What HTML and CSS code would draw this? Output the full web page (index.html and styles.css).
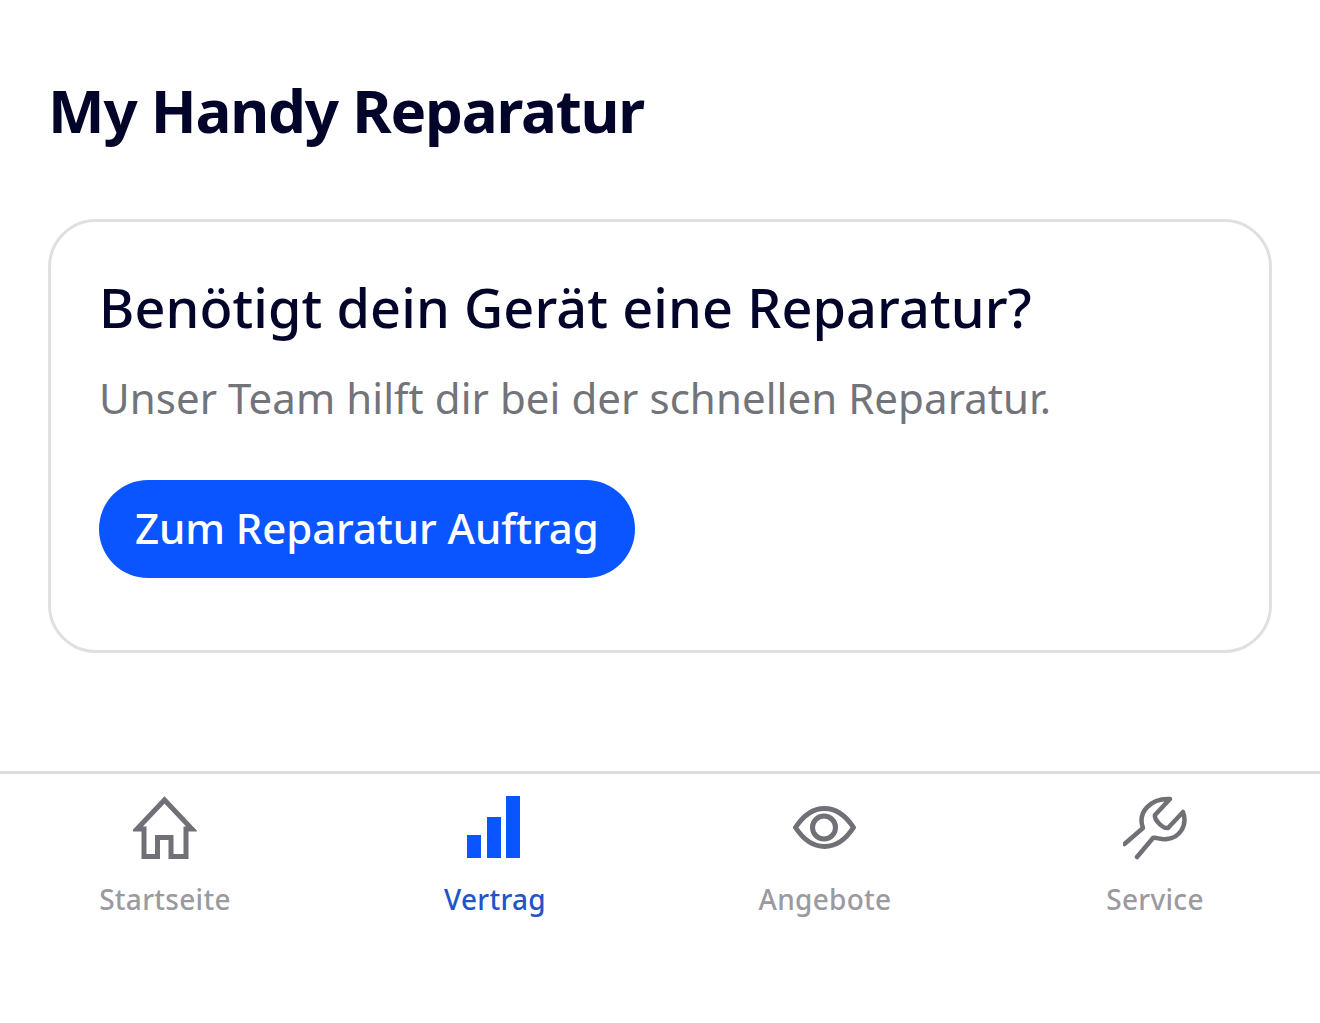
FILE: index.html
```html
<!DOCTYPE html>
<html lang="de">
<head>
  <meta charset="UTF-8">
  <title>My Handy Reparatur</title>
  <link rel="stylesheet" href="styles.css">
</head>
<body>
  <div id="page">
    <h1>My Handy Reparatur</h1>
    <div class="card">
      <h2>Benötigt dein Gerät eine Reparatur?</h2>
      <p>Unser Team hilft dir bei der schnellen Reparatur.</p>
      <a class="btn" href="#">Zum Reparatur Auftrag</a>
    </div>
  </div>
  <nav class="tabs">
    <a class="tab" href="#">
      <svg viewBox="0 0 64 64" fill="none" stroke="#707077" stroke-width="5" stroke-linejoin="miter"><path d="M4 33 31.5 4 59 33H53V60.5H38V41.5H24.5V60.5H11V33Z"/></svg>
      <span>Startseite</span>
    </a>
    <a class="tab active" href="#">
      <svg viewBox="0 0 64 64" fill="#0a55ff"><rect x="4" y="39" width="14" height="23"/><rect x="24" y="21" width="14" height="41"/><rect x="43" y="0" width="14" height="62"/></svg>
      <span>Vertrag</span>
    </a>
    <a class="tab" href="#">
      <svg viewBox="0 0 64 64" fill="none" stroke="#707077" stroke-width="5" stroke-linejoin="round"><path d="M2.5 31.5C11 18.500 21 12.500 31.500 12.500S52 18.500 60.500 31.500C52 44.500 42 50.500 31.500 50.500S11 44.500 2.500 31.500Z"/><circle cx="31" cy="31.500" r="11.500"/></svg>
      <span>Angebote</span>
    </a>
    <a class="tab" href="#">
      <svg viewBox="0 0 64 64" fill="none" stroke="#707077" stroke-width="4.500" stroke-linecap="round" stroke-linejoin="round"><path d="M1.500 48 20 32C14 16 28 2 47 3L32 19C31 24 40 33 45 32L60 16C65 30 56 42 44 43 38 44 33 41 30 42L14 61"/></svg>
      <span>Service</span>
    </a>
  </nav>
</body>
</html>
```

FILE: styles.css
```css
html, body {
  margin: 0;
  background: #fff;
  font-family: 'Noto Sans', sans-serif;
}

#page {
  height: 771px;
  padding: 0 48px;
  box-sizing: border-box;
  overflow: hidden;
}

h1 {
  margin: 71px 0 0;
  font-size: 60px;
  line-height: 78px;
  font-weight: 700;
  letter-spacing: -1.2px;
  color: #03042a;
}

.card {
  margin-top: 70px;
  height: 434px;
  box-sizing: border-box;
  padding: 51px 48px 0;
  border: 3px solid #e0e0e2;
  border-radius: 48px;
}

h2 {
  margin: 0;
  font-size: 54px;
  line-height: 68px;
  font-weight: 500;
  letter-spacing: 0.1px;
  color: #03042a;
}

.card p {
  margin: 28px 0 0;
  font-size: 42px;
  line-height: 58px;
  letter-spacing: 0.06px;
  color: #73737a;
}

.btn {
  display: inline-block;
  margin-top: 53px;
  padding: 0 36px;
  height: 98px;
  line-height: 96px;
  border-radius: 49px;
  background: #0a55ff;
  color: #fff;
  font-size: 42px;
  letter-spacing: -0.1px;
  font-weight: 500;
  text-decoration: none;
}

.tabs {
  display: grid;
  grid-template-columns: repeat(4, 1fr);
  border-top: 3px solid #dcdcde;
  padding-top: 22px;
}

.tab {
  display: flex;
  flex-direction: column;
  align-items: center;
  color: #9a9a9f;
  font-size: 28px;
  line-height: 38px;
  font-weight: 500;
  letter-spacing: 0.3px;
  text-decoration: none;
}

.tab svg {
  width: 64px;
  height: 64px;
  margin-bottom: 20px;
}

.tab.active {
  color: #1f55c8;
}
```
